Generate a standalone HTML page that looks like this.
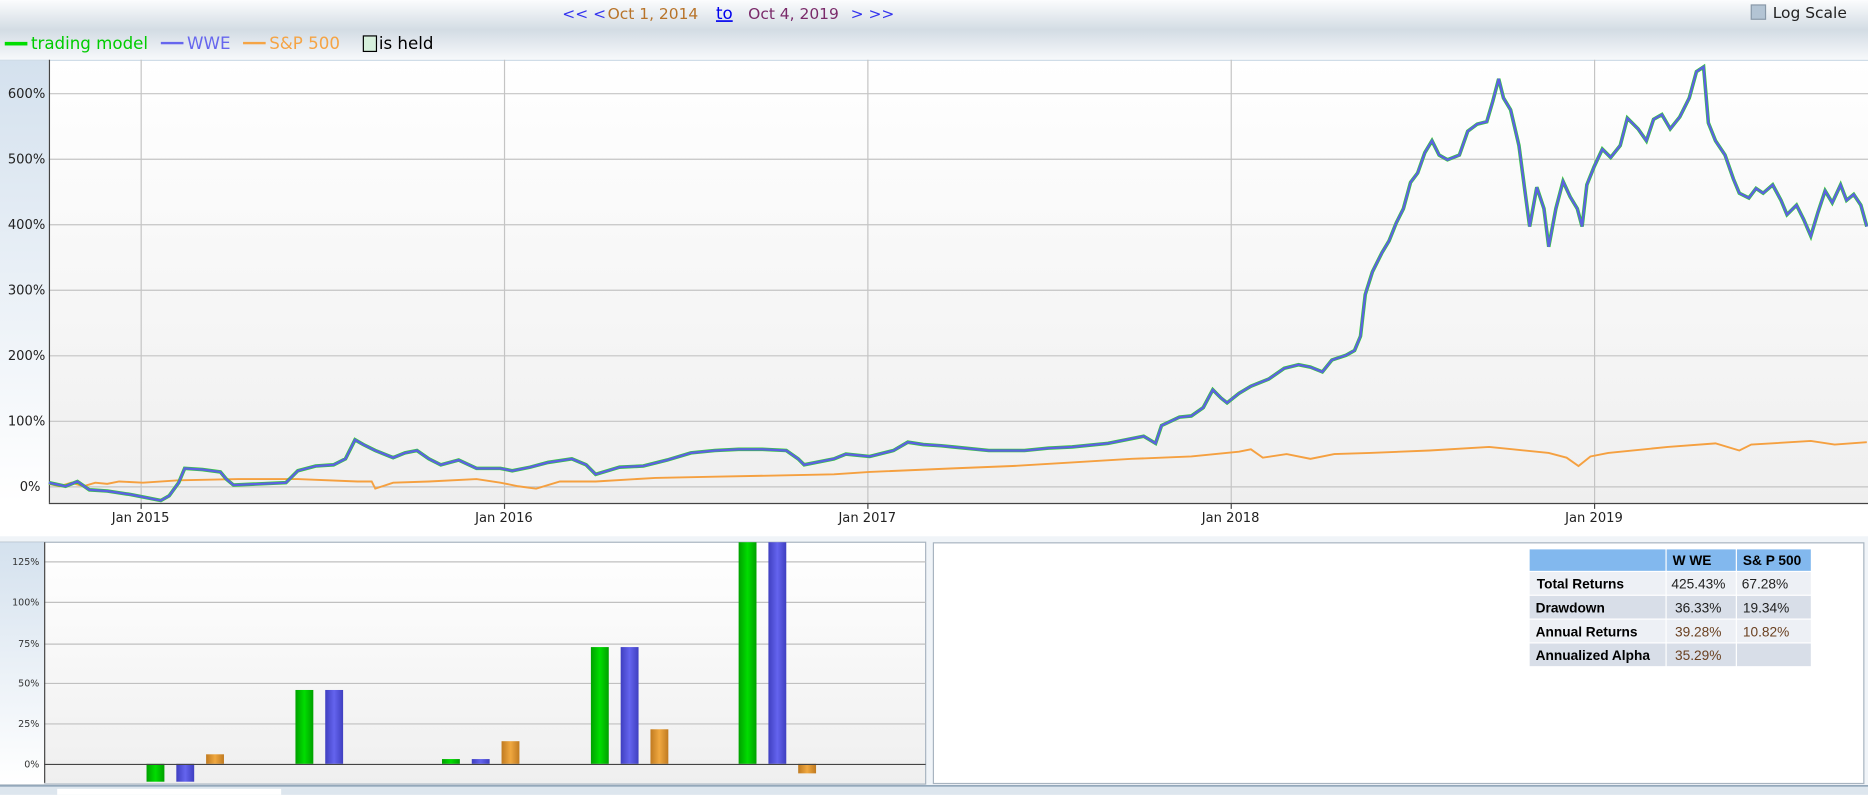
<!DOCTYPE html>
<html><head><meta charset="utf-8"><style>
html,body{margin:0;padding:0;background:#fff;overflow:hidden}
svg{display:block}
.d{font-family:"DejaVu Sans","Liberation Sans",sans-serif}
.l{font-family:"Liberation Sans",Arial,sans-serif}
</style></head><body>
<svg width="1868" height="795" viewBox="0 0 1568 667" xmlns="http://www.w3.org/2000/svg">
<defs>
<linearGradient id="hdr" x1="0" y1="0" x2="0" y2="1"><stop offset="0" stop-color="#fbfcfd"/><stop offset="0.5" stop-color="#d3dce4"/><stop offset="1" stop-color="#f7f9fb"/></linearGradient>
<linearGradient id="plot" x1="0" y1="0" x2="0" y2="1"><stop offset="0" stop-color="#ffffff"/><stop offset="1" stop-color="#efefef"/></linearGradient>
<linearGradient id="ax" x1="0" y1="0" x2="0" y2="1"><stop offset="0" stop-color="#d4e1ee"/><stop offset="1" stop-color="#ffffff"/></linearGradient>
<linearGradient id="gb" x1="0" y1="0" x2="1" y2="0"><stop offset="0" stop-color="#00a000"/><stop offset="0.5" stop-color="#00dd00"/><stop offset="1" stop-color="#00a000"/></linearGradient>
<linearGradient id="bb" x1="0" y1="0" x2="1" y2="0"><stop offset="0" stop-color="#3f3fc0"/><stop offset="0.5" stop-color="#6464ee"/><stop offset="1" stop-color="#3f3fc0"/></linearGradient>
<linearGradient id="ob" x1="0" y1="0" x2="1" y2="0"><stop offset="0" stop-color="#c07a20"/><stop offset="0.5" stop-color="#f0a840"/><stop offset="1" stop-color="#c07a20"/></linearGradient>
</defs>
<rect x="0" y="0" width="1568" height="50" fill="url(#hdr)"/>
<g class="d">
<text x="472" y="16" font-size="13" fill="#3333ee">&lt;&lt; &lt;</text>
<text x="510" y="16" font-size="13" fill="#b8742a">Oct 1, 2014</text>
<text x="601" y="16" font-size="14" fill="#0000ee" text-decoration="underline">to</text>
<text x="628" y="16" font-size="13" fill="#7a2a6a">Oct 4, 2019</text>
<text x="714" y="16" font-size="13" fill="#3333ee">&gt; &gt;&gt;</text>
<rect x="1470" y="4" width="12" height="12" fill="#b3c4d4" stroke="#8898a8"/>
<text x="1488" y="15" font-size="13" fill="#222">Log Scale</text>
<rect x="4" y="35" width="19" height="3" fill="#00dd00"/>
<text x="26" y="41" font-size="14" fill="#00cc00">trading model</text>
<rect x="135" y="35" width="19" height="2" fill="#6666ee"/>
<text x="157" y="41" font-size="14" fill="#6666ee">WWE</text>
<rect x="204" y="35" width="19" height="2" fill="#f5a445"/>
<text x="226" y="41" font-size="14" fill="#f5a445">S&amp;P 500</text>
<rect x="305" y="30" width="11" height="13" fill="#d6f0dc" stroke="#000"/>
<text x="318" y="41" font-size="14" fill="#000">is held</text>
</g>
<!-- main chart -->
<rect x="0" y="50" width="41" height="372" fill="url(#ax)"/>
<rect x="0" y="422" width="1568" height="32" fill="#fff"/>
<rect x="41" y="50" width="1527" height="372" fill="url(#plot)"/>
<line x1="0" y1="50.5" x2="1568" y2="50.5" stroke="#d0dde8"/>
<g stroke="#c4c4c4" stroke-width="1">
<line x1="118.5" y1="50" x2="118.5" y2="422"/><line x1="423.5" y1="50" x2="423.5" y2="422"/><line x1="728.5" y1="50" x2="728.5" y2="422"/><line x1="1033.5" y1="50" x2="1033.5" y2="422"/><line x1="1338.5" y1="50" x2="1338.5" y2="422"/>
<line x1="41" y1="78.5" x2="1568" y2="78.5"/><line x1="41" y1="133.5" x2="1568" y2="133.5"/><line x1="41" y1="188.5" x2="1568" y2="188.5"/><line x1="41" y1="243.5" x2="1568" y2="243.5"/><line x1="41" y1="298.5" x2="1568" y2="298.5"/><line x1="41" y1="353.5" x2="1568" y2="353.5"/><line x1="41" y1="408.5" x2="1568" y2="408.5"/>
</g>
<line x1="41.5" y1="50" x2="41.5" y2="422" stroke="#444"/>
<line x1="41" y1="422.5" x2="1568" y2="422.5" stroke="#444"/>
<g class="d" font-size="11" fill="#222" text-anchor="end">
<text x="38" y="82">600%</text><text x="38" y="137">500%</text><text x="38" y="192">400%</text><text x="38" y="247">300%</text><text x="38" y="302">200%</text><text x="38" y="357">100%</text><text x="34" y="412">0%</text></g>
<g class="d" font-size="11" fill="#222" text-anchor="middle">
<text x="118" y="438">Jan 2015</text><text x="423" y="438">Jan 2016</text><text x="728" y="438">Jan 2017</text><text x="1033" y="438">Jan 2018</text><text x="1338" y="438">Jan 2019</text></g>
<g stroke="#444"><line x1="118.5" y1="422" x2="118.5" y2="427"/><line x1="423.5" y1="422" x2="423.5" y2="427"/><line x1="728.5" y1="422" x2="728.5" y2="427"/><line x1="1033.5" y1="422" x2="1033.5" y2="427"/><line x1="1338.5" y1="422" x2="1338.5" y2="427"/></g>
<polyline fill="none" stroke="#f5a040" stroke-width="1.6" points="41,406 50,408 60,405 70,408 80,405 90,406 100,404 120,405 150,403 200,402 250,402 300,404 312,404 315,410 330,405 360,404 400,402 420,405 435,408 450,410 470,404 500,404 550,401 600,400 650,399 700,398 730,396 800,393 850,391 900,388 950,385 1000,383 1040,379 1050,377 1060,384 1080,381 1100,385 1120,381 1150,380 1200,378 1250,375 1270,377 1300,380 1315,384 1325,391 1335,383 1350,380 1400,375 1440,372 1460,378 1470,373 1520,370 1540,373 1567,371"/>
<polyline fill="none" stroke="#33cc33" stroke-width="3" points="41,405 55,408 65,404 75,411 90,412 110,415 125,418 135,420 142,416 150,405 155,393 170,394 185,396 190,402 196,407 240,405 250,395 265,391 280,390 290,385 298,369 305,373 315,378 330,384 340,380 350,378 360,385 370,390 385,386 400,393 420,393 430,395 445,392 460,388 480,385 492,390 500,398 520,392 540,391 560,386 580,380 600,378 620,377 640,377 660,378 670,385 675,390 700,385 710,381 730,383 750,378 762,371 775,373 790,374 800,375 830,378 860,378 880,376 900,375 930,372 950,368 960,366 970,372 975,357 990,350 1000,349 1010,342 1018,327 1025,334 1030,338 1040,330 1050,324 1065,318 1078,309 1090,306 1100,308 1110,312 1118,302 1130,298 1137,294 1142,282 1146,247 1152,228 1160,212 1166,202 1172,187 1178,175 1184,153 1190,145 1196,128 1202,118 1208,130 1215,134 1225,130 1232,110 1240,104 1248,102 1253,85 1258,66 1262,82 1268,92 1275,122 1280,160 1284,190 1290,157 1296,175 1300,207 1306,175 1312,152 1318,165 1324,175 1328,190 1332,155 1338,140 1345,125 1352,132 1360,122 1366,99 1375,108 1382,118 1388,100 1395,96 1402,108 1410,98 1418,82 1424,60 1430,56 1434,103 1440,118 1448,130 1455,150 1460,162 1468,166 1474,158 1480,162 1488,155 1495,168 1500,180 1508,172 1514,184 1520,198 1526,178 1532,160 1538,170 1545,155 1550,168 1556,163 1562,172 1567,190"/>
<polyline fill="none" stroke="#5c62e0" stroke-width="2" points="41,405 55,408 65,404 75,411 90,412 110,415 125,418 135,420 142,416 150,405 155,393 170,394 185,396 190,402 196,407 240,405 250,395 265,391 280,390 290,385 298,369 305,373 315,378 330,384 340,380 350,378 360,385 370,390 385,386 400,393 420,393 430,395 445,392 460,388 480,385 492,390 500,398 520,392 540,391 560,386 580,380 600,378 620,377 640,377 660,378 670,385 675,390 700,385 710,381 730,383 750,378 762,371 775,373 790,374 800,375 830,378 860,378 880,376 900,375 930,372 950,368 960,366 970,372 975,357 990,350 1000,349 1010,342 1018,327 1025,334 1030,338 1040,330 1050,324 1065,318 1078,309 1090,306 1100,308 1110,312 1118,302 1130,298 1137,294 1142,282 1146,247 1152,228 1160,212 1166,202 1172,187 1178,175 1184,153 1190,145 1196,128 1202,118 1208,130 1215,134 1225,130 1232,110 1240,104 1248,102 1253,85 1258,66 1262,82 1268,92 1275,122 1280,160 1284,190 1290,157 1296,175 1300,207 1306,175 1312,152 1318,165 1324,175 1328,190 1332,155 1338,140 1345,125 1352,132 1360,122 1366,99 1375,108 1382,118 1388,100 1395,96 1402,108 1410,98 1418,82 1424,60 1430,56 1434,103 1440,118 1448,130 1455,150 1460,162 1468,166 1474,158 1480,162 1488,155 1495,168 1500,180 1508,172 1514,184 1520,198 1526,178 1532,160 1538,170 1545,155 1550,168 1556,163 1562,172 1567,190"/>
<!-- bottom area -->
<rect x="0" y="450" width="1568" height="217" fill="#f0f4f8"/>
<rect x="0" y="455" width="777" height="203" fill="url(#plot)" stroke="#a8b4c0"/>
<rect x="0" y="455" width="37" height="203" fill="url(#ax)"/>
<g stroke="#c0c0c0"><line x1="37" y1="471.5" x2="777" y2="471.5"/><line x1="37" y1="505.5" x2="777" y2="505.5"/><line x1="37" y1="540.5" x2="777" y2="540.5"/><line x1="37" y1="573.5" x2="777" y2="573.5"/><line x1="37" y1="607.5" x2="777" y2="607.5"/></g>
<line x1="37.5" y1="455" x2="37.5" y2="657" stroke="#444"/>
<g class="d" font-size="8" fill="#333" text-anchor="end"><text x="33" y="474">125%</text><text x="33" y="508">100%</text><text x="33" y="543">75%</text><text x="33" y="576">50%</text><text x="33" y="610">25%</text><text x="33" y="644">0%</text></g>
<rect x="123" y="641" width="15" height="15" fill="url(#gb)"/><rect x="148" y="641" width="15" height="15" fill="url(#bb)"/><rect x="173" y="633" width="15" height="8" fill="url(#ob)"/>
<rect x="248" y="579" width="15" height="62" fill="url(#gb)"/><rect x="273" y="579" width="15" height="62" fill="url(#bb)"/>
<rect x="371" y="637" width="15" height="4" fill="url(#gb)"/><rect x="396" y="637" width="15" height="4" fill="url(#bb)"/><rect x="421" y="622" width="15" height="19" fill="url(#ob)"/>
<rect x="496" y="543" width="15" height="98" fill="url(#gb)"/><rect x="521" y="543" width="15" height="98" fill="url(#bb)"/><rect x="546" y="612" width="15" height="29" fill="url(#ob)"/>
<rect x="620" y="455" width="15" height="186" fill="url(#gb)"/><rect x="645" y="455" width="15" height="186" fill="url(#bb)"/><rect x="670" y="641" width="15" height="8" fill="url(#ob)"/>
<line x1="37" y1="641.5" x2="777" y2="641.5" stroke="#444"/>
<rect x="783.5" y="455.5" width="781" height="202" fill="#fff" stroke="#a8b4c0"/>
<rect x="0" y="659" width="1568" height="8" fill="#dde6ee"/>
<line x1="0" y1="659.5" x2="1568" y2="659.5" stroke="#7890a8"/>
<rect x="48" y="662" width="188" height="5" fill="#fff"/>
<!-- table -->
<rect x="1284" y="461" width="114" height="18" fill="#82b8ee"/><rect x="1399" y="461" width="58" height="18" fill="#82b8ee"/><rect x="1458" y="461" width="62" height="18" fill="#82b8ee"/>
<rect x="1284" y="480" width="114" height="19" fill="#edf0f5"/><rect x="1399" y="480" width="58" height="19" fill="#edf0f5"/><rect x="1458" y="480" width="62" height="19" fill="#edf0f5"/>
<rect x="1284" y="500" width="114" height="19" fill="#d8dee8"/><rect x="1399" y="500" width="58" height="19" fill="#d8dee8"/><rect x="1458" y="500" width="62" height="19" fill="#d8dee8"/>
<rect x="1284" y="520" width="114" height="19" fill="#edf0f5"/><rect x="1399" y="520" width="58" height="19" fill="#edf0f5"/><rect x="1458" y="520" width="62" height="19" fill="#edf0f5"/>
<rect x="1284" y="540" width="114" height="19" fill="#d8dee8"/><rect x="1399" y="540" width="58" height="19" fill="#d8dee8"/><rect x="1458" y="540" width="62" height="19" fill="#d8dee8"/>
<g class="l" font-size="11.5">
<text x="1404" y="474" font-weight="bold">W WE</text><text x="1463" y="474" font-weight="bold">S&amp; P 500</text>
<text x="1290" y="494" font-weight="bold">Total Returns</text><text x="1403" y="494" fill="#222">425.43%</text><text x="1462" y="494" fill="#222">67.28%</text>
<text x="1289" y="514" font-weight="bold">Drawdown</text><text x="1406" y="514" fill="#222">36.33%</text><text x="1463" y="514" fill="#222">19.34%</text>
<text x="1289" y="534" font-weight="bold">Annual Returns</text><text x="1406" y="534" fill="#6a4020">39.28%</text><text x="1463" y="534" fill="#6a4020">10.82%</text>
<text x="1289" y="554" font-weight="bold">Annualized Alpha</text><text x="1406" y="554" fill="#6a4020">35.29%</text>
</g>
</svg>
</body></html>
